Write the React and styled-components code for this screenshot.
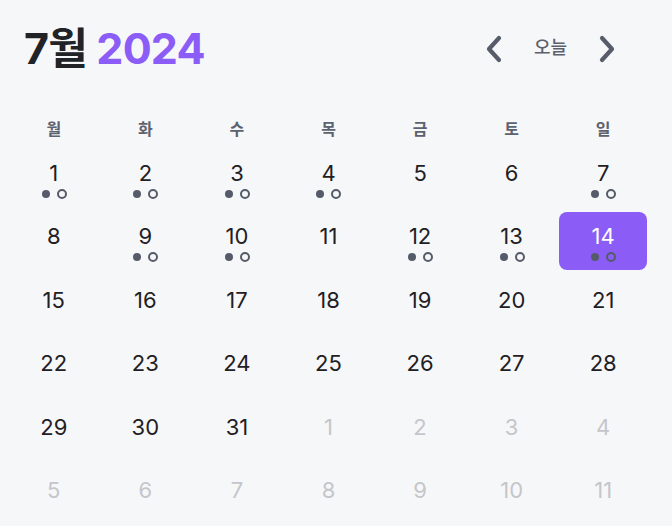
import React from 'react';
import styled, { createGlobalStyle } from 'styled-components';

const GlobalStyle = createGlobalStyle`
  html, body {
    margin: 0;
    padding: 0;
    background: #f6f7f9;
  }
  body {
    font-family: Inter, "Noto Sans CJK KR", "Noto Sans", sans-serif;
  }
`;

const WEEKDAYS = ['월', '화', '수', '목', '금', '토', '일'];
const MARKED = [1, 2, 3, 4, 7, 9, 10, 12, 13, 14];
const TODAY = 14;

const buildDays = () => {
  const days = [];
  for (let d = 1; d <= 31; d++) days.push({ day: d, current: true });
  for (let d = 1; d <= 11; d++) days.push({ day: d, current: false });
  return days;
};

export default function App() {
  const days = buildDays();

  return (
    <Page>
      <GlobalStyle />
      <Header>
        <Title>
          7월 <Year>2024</Year>
        </Title>
        <Nav>
          <NavButton aria-label="이전 달">
            <svg width="20" height="30" viewBox="0 0 20 30">
              <polyline points="15,4 5,15 15,26" fill="none" stroke="#565c69" strokeWidth="4.2" strokeLinecap="round" strokeLinejoin="round" />
            </svg>
          </NavButton>
          <TodayButton>오늘</TodayButton>
          <NavButton aria-label="다음 달">
            <svg width="20" height="30" viewBox="0 0 20 30">
              <polyline points="5,4 15,15 5,26" fill="none" stroke="#565c69" strokeWidth="4.2" strokeLinecap="round" strokeLinejoin="round" />
            </svg>
          </NavButton>
        </Nav>
      </Header>

      <WeekRow>
        {WEEKDAYS.map((w) => (
          <WeekLabel key={w}>{w}</WeekLabel>
        ))}
      </WeekRow>

      <Grid>
        {days.map(({ day, current }, i) => {
          const selected = current && day === TODAY;
          const marked = current && MARKED.includes(day);
          return (
            <Cell key={i} $selected={selected}>
              <DayNum $muted={!current} $selected={selected}>{day}</DayNum>
              {marked && (
                <Dots>
                  <Dot />
                  <Dot $outline />
                </Dots>
              )}
            </Cell>
          );
        })}
      </Grid>
    </Page>
  );
}

const Page = styled.div`
  width: 672px;
  height: 526px;
  box-sizing: border-box;
  padding: 0 25px 0 10px;
  overflow: hidden;
`;

const Header = styled.div`
  display: flex;
  align-items: center;
  justify-content: space-between;
  height: 97px;
  padding: 0 0 0 14px;
`;

const Title = styled.h1`
  margin: 0;
  font-size: 43px;
  font-weight: 700;
  letter-spacing: -0.8px;
  color: #222326;
  line-height: 1;
`;

const Year = styled.span`
  color: #8b5cf6;
`;

const Nav = styled.div`
  display: flex;
  align-items: center;
  gap: 21px;
  margin-right: 25px;
`;

const NavButton = styled.button`
  display: flex;
  align-items: center;
  justify-content: center;
  width: 30px;
  height: 36px;
  padding: 0;
  border: none;
  background: transparent;
  cursor: pointer;
`;

const TodayButton = styled.button`
  border: none;
  background: transparent;
  padding: 0 4px;
  margin-bottom: 5px;
  font-family: inherit;
  font-size: 18px;
  font-weight: 500;
  color: #5c616d;
  cursor: pointer;
`;

const WeekRow = styled.div`
  display: grid;
  grid-template-columns: repeat(7, 1fr);
  column-gap: 4px;
  height: 30px;
  margin-top: 16px;
  align-items: center;
`;

const WeekLabel = styled.div`
  text-align: center;
  font-size: 16px;
  font-weight: 700;
  color: #5d6270;
`;

const Grid = styled.div`
  display: grid;
  grid-template-columns: repeat(7, 1fr);
  grid-auto-rows: 58px;
  column-gap: 4px;
  row-gap: 5.4px;
  margin-top: 6px;
`;

const Cell = styled.div`
  display: flex;
  flex-direction: column;
  align-items: center;
  border-radius: 8px;
  background: ${(p) => (p.$selected ? '#8b5cf6' : 'transparent')};
`;

const DayNum = styled.div`
  margin-top: 11px;
  height: 26px;
  line-height: 26px;
  font-size: 22px;
  font-weight: 400;
  color: ${(p) => (p.$selected ? '#ffffff' : p.$muted ? '#c5c6ca' : '#1f2023')};
`;

const Dots = styled.div`
  display: flex;
  align-items: center;
  gap: 7px;
  margin-top: 3px;
  padding-left: 1px;
`;

const Dot = styled.span`
  box-sizing: border-box;
  width: ${(p) => (p.$outline ? '10px' : '8px')};
  height: ${(p) => (p.$outline ? '10px' : '8px')};
  border-radius: 50%;
  background: ${(p) => (p.$outline ? 'transparent' : '#555b68')};
  border: ${(p) => (p.$outline ? '2px solid #555b68' : 'none')};
`;
